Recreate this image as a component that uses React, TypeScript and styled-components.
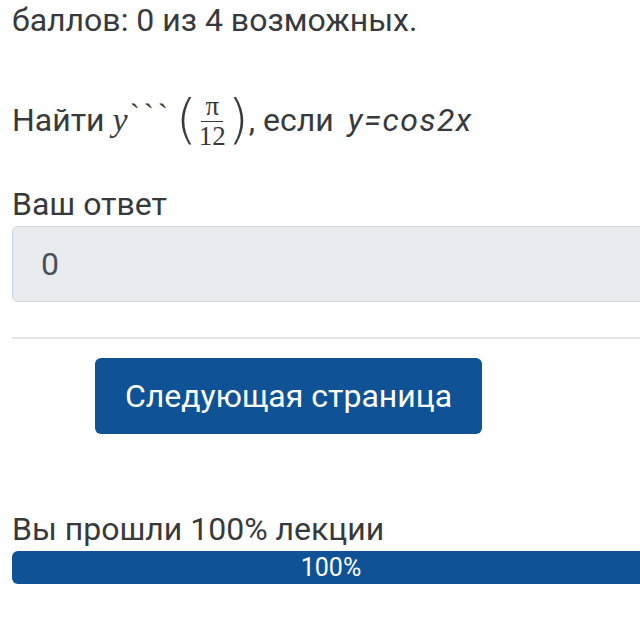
import styled, { createGlobalStyle } from 'styled-components';

const GlobalStyle = createGlobalStyle`
  html, body {
    margin: 0;
    padding: 0;
    background: #fff;
    overflow: hidden;
  }

  body {
    font-family: Roboto, "Liberation Sans", sans-serif;
    color: #373a3c;
  }
`;

const PRIMARY = '#0f5296';

const Page = styled.main`
  width: 638px;
  padding: 0 0 0 12px;
  margin-top: -4px;
  font-size: 32px;
  line-height: 48px;
`;

const Score = styled.p`
  margin: 0 0 52px;
`;

const Question = styled.p`
  display: flex;
  align-items: center;
  height: 48px;
  margin: 0 0 41px;
  white-space: pre;
`;

const MathVar = styled.span`
  margin-left: 8px;
  font-family: "Liberation Serif", "DejaVu Serif", serif;
  font-style: italic;
  font-size: 34px;
`;

const Primes = styled.span`
  align-self: flex-start;
  margin: -6px 4px 0 2px;
  font-family: "Liberation Serif", serif;
  font-size: 30px;
  letter-spacing: 4px;
`;

const Paren = styled.span`
  font-family: "DejaVu Sans", sans-serif;
  font-weight: 200;
  font-size: 54px;
  line-height: 1;
  color: #3a3a3a;
`;

const Fraction = styled.span`
  display: inline-flex;
  flex-direction: column;
  align-items: center;
  margin: 3px 2px 0;
  font-family: "Liberation Serif", serif;
  font-size: 27px;
  line-height: 1;
`;

const Numerator = styled.span`
  padding: 0 4px 1px;
  border-bottom: 1.5px solid #3a3a3a;
`;

const Denominator = styled.span`
  padding-top: 1px;
`;

const Italic = styled.span`
  margin-left: 14px;
  font-style: italic;
  letter-spacing: 1.5px;
`;

const Label = styled.label`
  display: block;
  margin: 0 0 3px;
  line-height: 1.2;
`;

const AnswerInput = styled.div`
  box-sizing: border-box;
  height: 76px;
  padding: 0 0 0 28px;
  display: flex;
  align-items: center;
  background: #e9ecef;
  border: 1.5px solid #ced4da;
  border-radius: 6px;
  color: #495057;
`;

const Divider = styled.hr`
  margin: 35px 0 19px;
  border: 0;
  border-top: 2px solid #e7e7e7;
`;

const NextButton = styled.button`
  display: block;
  margin-left: 83px;
  height: 76px;
  padding: 0 30px;
  border: 0;
  border-radius: 6px;
  background: ${PRIMARY};
  color: #fff;
  font-family: inherit;
  font-size: 32px;
`;

const ProgressTitle = styled.p`
  margin: 76px 0 2px;
  line-height: 1.2;
`;

const ProgressTrack = styled.div`
  height: 33px;
  border-radius: 6px;
  background: #e9ecef;
  overflow: hidden;
`;

const ProgressFill = styled.div`
  height: 100%;
  display: flex;
  align-items: center;
  justify-content: center;
  background: ${PRIMARY};
  color: #fff;
  font-size: 25px;
  line-height: 1;
`;

const App = () => {
  const progress = 100;

  return (
    <>
      <GlobalStyle />
      <Page>
        <Score>баллов: 0 из 4 возможных.</Score>

        <Question>
          Найти<MathVar>y</MathVar>
          <Primes>```</Primes>
          <Paren>(</Paren>
          <Fraction>
            <Numerator>π</Numerator>
            <Denominator>12</Denominator>
          </Fraction>
          <Paren>)</Paren>, если<Italic>y=cos2x</Italic>
        </Question>

        <Label>Ваш ответ</Label>
        <AnswerInput>0</AnswerInput>

        <Divider />

        <NextButton>Следующая страница</NextButton>

        <ProgressTitle>Вы прошли 100% лекции</ProgressTitle>
        <ProgressTrack>
          <ProgressFill style={{ width: `${progress}%` }}>{progress}%</ProgressFill>
        </ProgressTrack>
      </Page>
    </>
  );
};

export default App;
